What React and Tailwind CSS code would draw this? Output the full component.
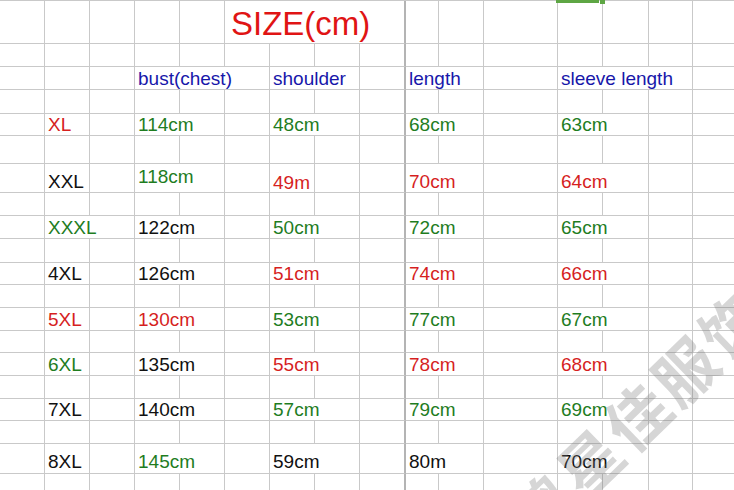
import React from 'react';

const RED = 'text-[#d61f1f]';
const GREEN = 'text-[#1f7d1f]';
const BLUE = 'text-[#1717aa]';
const BLACK = 'text-[#111111]';

const SPAN = { 1: 'col-span-1', 2: 'col-span-2', 3: 'col-span-3', 4: 'col-span-4' };

// each size row: label, bust, shoulder, length, sleeve  ([text, colour, padding, span])
const sizes = [
  { label: ['XL', RED], bust: ['114cm', GREEN], shoulder: ['48cm', GREEN], length: ['68cm', GREEN], sleeve: ['63cm', GREEN] },
  { label: ['XXL', BLACK], bust: ['118cm', GREEN, 'pb-[6px]'], shoulder: ['49m', RED, 'pb-0', 1], length: ['70cm', RED], sleeve: ['64cm', RED] },
  { label: ['XXXL', GREEN, null, 2], bust: ['122cm', BLACK], shoulder: ['50cm', GREEN], length: ['72cm', GREEN], sleeve: ['65cm', GREEN] },
  { label: ['4XL', BLACK], bust: ['126cm', BLACK], shoulder: ['51cm', RED], length: ['74cm', RED], sleeve: ['66cm', RED] },
  { label: ['5XL', RED], bust: ['130cm', RED], shoulder: ['53cm', GREEN], length: ['77cm', GREEN], sleeve: ['67cm', GREEN] },
  { label: ['6XL', GREEN], bust: ['135cm', BLACK], shoulder: ['55cm', RED], length: ['78cm', RED], sleeve: ['68cm', RED] },
  { label: ['7XL', BLACK], bust: ['140cm', BLACK], shoulder: ['57cm', GREEN], length: ['79cm', GREEN], sleeve: ['69cm', GREEN] },
  { label: ['8XL', BLACK], bust: ['145cm', GREEN], shoulder: ['59cm', BLACK], length: ['80m', BLACK], sleeve: ['70cm', BLACK], pb: 'pb-[2px]' },
];

const sizeRow = (s) => {
  const cell = (col, [text, color, pb, span], defSpan) => ({
    col,
    span: span || defSpan,
    text,
    color,
    pb: pb || s.pb,
  });
  return [
    cell(1, s.label, 1),
    cell(3, s.bust, 2),
    cell(6, s.shoulder, 2),
    cell(9, s.length, 2),
    cell(12, s.sleeve, 2),
  ];
};

const rows = [
  [{ col: 5, span: 4, text: 'SIZE(cm)', title: true }],
  [],
  [
    { col: 3, span: 3, text: 'bust(chest)', color: BLUE },
    { col: 6, span: 2, text: 'shoulder', color: BLUE },
    { col: 9, span: 2, text: 'length', color: BLUE },
    { col: 12, span: 3, text: 'sleeve length', color: BLUE },
  ],
  [],
];
sizes.forEach((s) => {
  rows.push(sizeRow(s));
  rows.push([]);
});

const Cell = ({ col, span = 1, children, className = '' }) => {
  const last = col + span - 1;
  const right = last === 8 ? 'border-r-2 border-r-[#b4b4b4]' : 'border-r';
  return (
    <div
      className={`${SPAN[span]} flex items-end whitespace-nowrap border-b border-[#c9c9c9] ${right} ${className}`}
    >
      {children}
    </div>
  );
};

const buildRow = (cells, r) => {
  const out = [];
  let c = 0;
  while (c < 16) {
    const cell = cells.find((x) => x.col === c);
    if (cell) {
      out.push(
        <Cell
          key={`${r}-${c}`}
          col={c}
          span={cell.span}
          className={cell.title ? 'pl-[6px] pb-[1px]' : `pl-[3px] ${cell.pb || 'pb-[1px]'}`}
        >
          {cell.title ? (
            <span className="text-[33px] leading-[36px] text-[#e01414]">{cell.text}</span>
          ) : (
            <span className={`text-[19px] leading-[18px] ${cell.color}`}>{cell.text}</span>
          )}
        </Cell>
      );
      c += cell.span;
    } else {
      out.push(<Cell key={`${r}-${c}`} col={c} />);
      c += 1;
    }
  }
  return out;
};

export default function App() {
  return (
    <div
      className="relative w-[734px] h-[490px] overflow-hidden bg-white"
      style={{ fontFamily: '"Liberation Sans", Arial, sans-serif' }}
    >
      {/* sheet grid */}
      <div className="grid w-[738px] border-t border-[#c9c9c9] grid-cols-[45px_45px_45px_45px_45px_45px_45px_45px_46px_33px_45px_74px_45px_46px_44px_45px] grid-rows-[43px_23px_23px_24px_22px_28px_29px_23px_23px_24px_22px_23px_23px_22px_23px_23px_22px_23px_30px_23px]">
        {rows.map((cells, r) => buildRow(cells, r))}
      </div>

      {/* selection marker */}
      <div className="absolute left-[556px] top-0 h-[3px] w-[43px] bg-[#5ea644]" />
      <div className="absolute left-[600px] top-0 h-[4px] w-[5px] bg-[#5ea644]" />

      {/* watermark */}
      <span
        className="absolute left-[518px] top-[528px] origin-left whitespace-nowrap text-[62px] leading-none font-bold tracking-[4px] text-[rgba(120,120,120,0.3)] pointer-events-none"
        style={{ fontFamily: '"Noto Sans CJK SC", sans-serif', transform: 'translateY(-50%) rotate(-44deg)' }}
      >
        鸿星佳服饰
      </span>
    </div>
  );
}
